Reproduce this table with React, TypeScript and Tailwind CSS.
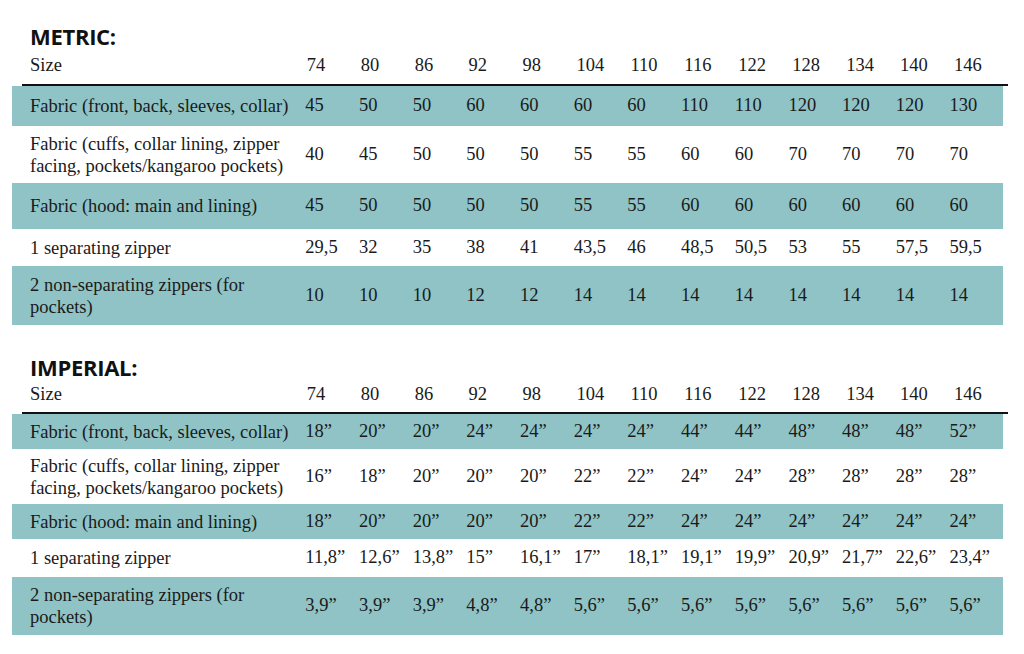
const sizes = ["74", "80", "86", "92", "98", "104", "110", "116", "122", "128", "134", "140", "146"]

interface Row {
  label: string[]
  values: string[]
  h: string
  teal: boolean
}

const q = "”"
const serif = "[font-family:'Liberation_Serif',serif]! text-[18.5px] text-[#1a1a1a]"

const metricRows: Row[] = [
  {
    label: ["Fabric (front, back, sleeves, collar)"],
    values: ["45", "50", "50", "60", "60", "60", "60", "110", "110", "120", "120", "120", "130"],
    h: "h-[40px]",
    teal: true,
  },
  {
    label: ["Fabric (cuffs, collar lining, zipper", "facing, pockets/kangaroo pockets)"],
    values: ["40", "45", "50", "50", "50", "55", "55", "60", "60", "70", "70", "70", "70"],
    h: "h-[57px]",
    teal: false,
  },
  {
    label: ["Fabric (hood: main and lining)"],
    values: ["45", "50", "50", "50", "50", "55", "55", "60", "60", "60", "60", "60", "60"],
    h: "h-[46px]",
    teal: true,
  },
  {
    label: ["1 separating zipper"],
    values: ["29,5", "32", "35", "38", "41", "43,5", "46", "48,5", "50,5", "53", "55", "57,5", "59,5"],
    h: "h-[37px]",
    teal: false,
  },
  {
    label: ["2 non-separating zippers (for", "pockets)"],
    values: ["10", "10", "10", "12", "12", "14", "14", "14", "14", "14", "14", "14", "14"],
    h: "h-[59px]",
    teal: true,
  },
]

const imperialRows: Row[] = [
  {
    label: ["Fabric (front, back, sleeves, collar)"],
    values: ["18", "20", "20", "24", "24", "24", "24", "44", "44", "48", "48", "48", "52"].map((v) => v + q),
    h: "h-[35px]",
    teal: true,
  },
  {
    label: ["Fabric (cuffs, collar lining, zipper", "facing, pockets/kangaroo pockets)"],
    values: ["16", "18", "20", "20", "20", "22", "22", "24", "24", "28", "28", "28", "28"].map((v) => v + q),
    h: "h-[55px]",
    teal: false,
  },
  {
    label: ["Fabric (hood: main and lining)"],
    values: ["18", "20", "20", "20", "20", "22", "22", "24", "24", "24", "24", "24", "24"].map((v) => v + q),
    h: "h-[35px]",
    teal: true,
  },
  {
    label: ["1 separating zipper"],
    values: ["11,8", "12,6", "13,8", "15", "16,1", "17", "18,1", "19,1", "19,9", "20,9", "21,7", "22,6", "23,4"].map((v) => v + q),
    h: "h-[38px]",
    teal: false,
  },
  {
    label: ["2 non-separating zippers (for", "pockets)"],
    values: ["3,9", "3,9", "3,9", "4,8", "4,8", "5,6", "5,6", "5,6", "5,6", "5,6", "5,6", "5,6", "5,6"].map((v) => v + q),
    h: "h-[58px]",
    teal: true,
  },
]

function SizeTable({
  title,
  rows,
  headH,
  titleH,
}: {
  title: string
  rows: Row[]
  headH: string
  titleH: string
}) {
  return (
    <div>
      <div
        className={`${titleH} pl-[30px] flex items-end text-[22px] font-bold leading-none text-[#111] tracking-[-0.3px] [font-family:'Open_Sans','Liberation_Sans',sans-serif]!`}
      >
        {title}
      </div>
      {/* header row */}
      <div className={`${headH} ml-[22px] w-[986px] border-b-2 border-[#111] flex items-center`}>
        <div className={`w-[286px] pl-[8px] ${serif}`}>Size</div>
        {sizes.map((s) => (
          <div key={s} className={`w-[54.2px] ${serif}`}>
            {s}
          </div>
        ))}
      </div>
      {rows.map((r, i) => (
        <div
          key={i}
          className={`${r.h} ml-[12px] w-[991px] flex items-center ${r.teal ? "bg-[#8fc3c5]" : ""}`}
        >
          <div className="w-[296px] pl-[18px]">
            {r.label.map((l, j) => (
              <div key={j} className={`leading-[22px] ${serif}`}>
                {l}
              </div>
            ))}
          </div>
          {r.values.map((v, j) => (
            <div key={j} className={`w-[54.2px] whitespace-nowrap ${serif}`}>
              {v}
            </div>
          ))}
        </div>
      ))}
    </div>
  )
}

export default function App() {
  return (
    <div className="w-[1024px] h-[654px] bg-white overflow-hidden">
      <div className="pt-[30px]">
        <SizeTable title="METRIC:" rows={metricRows} titleH="h-[17px]" headH="h-[39px]" />
        <div className="h-[37px]" />
        <SizeTable title="IMPERIAL:" rows={imperialRows} titleH="h-[16px]" headH="h-[36px]" />
      </div>
    </div>
  )
}
